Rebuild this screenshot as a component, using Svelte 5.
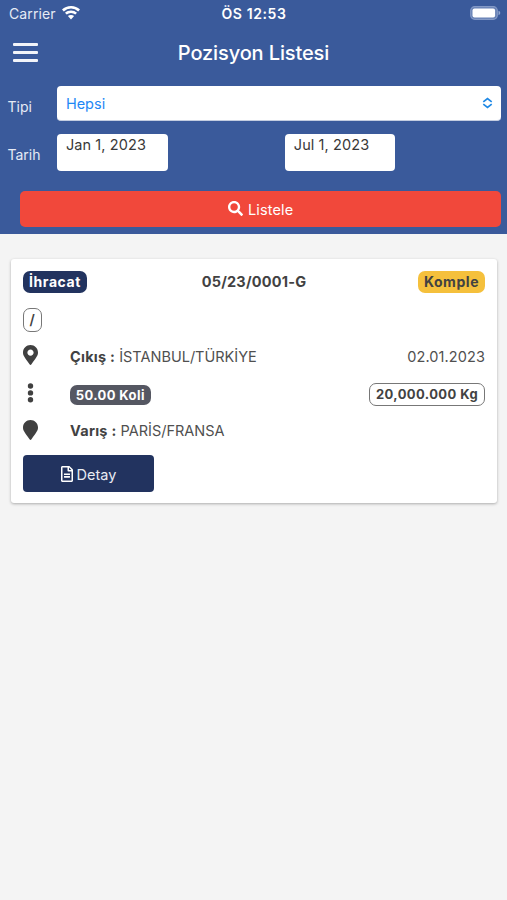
<script>
  const card = {
    direction: 'İhracat',
    number: '05/23/0001-G',
    load: 'Komple',
    plates: '/',
    from: 'İSTANBUL/TÜRKİYE',
    date: '02.01.2023',
    packages: '50.00 Koli',
    weight: '20,000.000 Kg',
    to: 'PARİS/FRANSA'
  };
</script>

<div class="screen">
  <header>
    <div class="status">
      <div class="carrier">
        <span>Carrier</span>
        <svg width="18" height="14" viewBox="0 0 18 14" fill="#fff">
          <path d="M9 0C5.5 0 2.3 1.3 0 3.5L1.8 5.4A10.5 10.5 0 0 1 16.2 5.4L18 3.5A13 13 0 0 0 9 0Z" />
          <path d="M9 4.5C6.700 4.500 4.600 5.400 3 6.800L4.700 8.600A6.300 6.300 0 0 1 13.300 8.600L15 6.800A8.700 8.700 0 0 0 9 4.500Z" />
          <path d="M9 9C7.800 9 6.700 9.400 5.900 10.100L9 13.600L12.100 10.100A4.700 4.700 0 0 0 9 9Z" />
        </svg>
      </div>
      <span class="clock">ÖS 12:53</span>
      <svg class="battery" width="31" height="14" viewBox="0 0 31 14">
        <rect x="0.700" y="0.700" width="26.600" height="12.600" rx="4" fill="#6680b4" stroke="#8399c6" stroke-width="1.200" />
        <rect x="2.500" y="2.500" width="22.600" height="9" rx="2" fill="#fff" />
        <path d="M28.500 4.800Q30.300 5.400 30.300 7T28.500 9.200Z" fill="#92a6cf" />
      </svg>
    </div>

    <div class="navbar">
      <button class="menu" aria-label="Menü"><i></i><i></i><i></i></button>
      <h1>Pozisyon Listesi</h1>
    </div>

    <div class="field type">
      <label for="tipi">Tipi</label>
      <button class="select" id="tipi">
        <span>Hepsi</span>
        <svg width="11" height="12" viewBox="0 0 12 12" fill="none" stroke="#1e88e5" stroke-width="1.800">
          <path d="M1.400 4.800L6 1.100L10.600 4.800M1.400 7.200L6 10.900L10.600 7.200" />
        </svg>
      </button>
    </div>

    <div class="field dates">
      <span class="label">Tarih</span>
      <div class="date"><span>Jan 1, 2023</span></div>
      <div class="date"><span>Jul 1, 2023</span></div>
    </div>

    <button class="list">
      <svg width="15" height="15" viewBox="0 0 512 512" fill="#fff">
        <path d="M505 442.700L405.300 343c-4.500-4.500-10.600-7-17-7H372c27.600-35.300 44-79.700 44-128C416 93.100 322.900 0 208 0S0 93.100 0 208s93.100 208 208 208c48.300 0 92.700-16.400 128-44v16.300c0 6.400 2.500 12.500 7 17l99.700 99.700c9.400 9.400 24.600 9.400 33.900 0l28.300-28.300c9.400-9.400 9.400-24.600.1-34zM208 336c-70.700 0-128-57.200-128-128 0-70.700 57.200-128 128-128 70.700 0 128 57.200 128 128 0 70.700-57.200 128-128 128z" />
      </svg>
      <span>Listele</span>
    </button>
  </header>

  <main>
    <article>
      <div class="row top">
        <span class="badge navy">{card.direction}</span>
        <strong class="number">{card.number}</strong>
        <span class="badge yellow">{card.load}</span>
      </div>

      <div class="row plate"><span class="badge outline slash">{card.plates}</span></div>

      <div class="row from">
        <span class="icon">
          <svg width="15" height="20" viewBox="0 0 384 512" fill="#404040">
            <path d="M172.300 501.700C27 291 0 269.400 0 192 0 86 86 0 192 0s192 86 192 192c0 77.400-27 99-172.300 309.700-9.500 13.800-29.900 13.800-39.400 0zM192 272c44.200 0 80-35.800 80-80s-35.800-80-80-80-80 35.800-80 80 35.800 80 80 80z" />
          </svg>
        </span>
        <b class="caption">Çıkış :</b><span class="place">{card.from}</span>
        <span class="day">{card.date}</span>
      </div>

      <div class="row load">
        <span class="icon">
          <svg width="15" height="20" viewBox="0 0 15 20" fill="#404040">
            <circle cx="7.500" cy="3" r="2.700" /><circle cx="7.500" cy="9.900" r="2.700" /><circle cx="7.500" cy="16.800" r="2.700" />
          </svg>
        </span>
        <span class="badge gray">{card.packages}</span>
        <span class="badge outline weight">{card.weight}</span>
      </div>

      <div class="row to">
        <span class="icon">
          <svg width="15" height="20" viewBox="0 0 384 512" fill="#404040">
            <path d="M172.300 501.700C27 291 0 269.400 0 192 0 86 86 0 192 0s192 86 192 192c0 77.400-27 99-172.300 309.700-9.500 13.800-29.900 13.800-39.400 0z" />
          </svg>
        </span>
        <b class="caption">Varış :</b><span class="place">{card.to}</span>
      </div>

      <button class="detail">
        <svg width="12" height="16" viewBox="0 0 384 512" fill="#fff">
          <path d="M288 248v28c0 6.600-5.400 12-12 12H108c-6.600 0-12-5.400-12-12v-28c0-6.600 5.400-12 12-12h168c6.600 0 12 5.400 12 12zm-12 72H108c-6.600 0-12 5.400-12 12v28c0 6.600 5.400 12 12 12h168c6.600 0 12-5.400 12-12v-28c0-6.600-5.400-12-12-12zm108-188.100V464c0 26.500-21.500 48-48 48H48c-26.500 0-48-21.500-48-48V48C0 21.500 21.500 0 48 0h204.100C264.800 0 277 5.100 286 14.100L369.900 98c9 8.900 14.100 21.200 14.100 33.900zm-128-80V128h76.100L256 51.900zM336 464V176H232c-13.300 0-24-10.700-24-24V48H48v416h288z" />
        </svg>
        <span>Detay</span>
      </button>
    </article>
  </main>
</div>

<style>
  :global(body) {
    margin: 0;
    background: #f4f4f4;
  }
  .screen {
    box-sizing: border-box;
    width: 507px;
    height: 900px;
    overflow: hidden;
    background: #f4f4f4;
    color: #424242;
    font-family: Inter, 'Liberation Sans', sans-serif;
    font-size: 14.5px;
    line-height: 20px;
    white-space: nowrap;
  }
  button {
    border: 0;
    margin: 0;
    padding: 0;
    background: none;
    color: inherit;
    font: inherit;
  }
  svg {
    display: block;
    flex: none;
  }
  header {
    box-sizing: border-box;
    height: 234px;
    background: #3a5a9b;
    color: #fff;
  }
  .status {
    display: grid;
    grid-template-columns: 1fr auto 1fr;
    align-items: center;
    height: 27px;
    padding: 0 6px 0 9px;
  }
  .carrier {
    display: flex;
    align-items: center;
    gap: 6px;
    color: #e6ebf5;
    font-size: 14px;
    letter-spacing: 0.1px;
  }
  .carrier svg {
    margin-top: -1px;
  }
  .clock {
    margin-right: 2px;
    font-size: 14px;
    font-weight: 600;
    letter-spacing: 0.6px;
  }
  .battery {
    justify-self: end;
    margin-top: -1px;
  }
  .navbar {
    display: grid;
    grid-template-columns: 38px 1fr 38px;
    align-items: center;
    height: 50px;
  }
  .menu {
    display: flex;
    flex-direction: column;
    gap: 5px;
    width: 25px;
    margin-left: 13px;
  }
  .menu i {
    height: 3px;
    border-radius: 1px;
    background: #f2f4f9;
  }
  h1 {
    margin: 1px 0 0;
    text-align: center;
    font-size: 20px;
    line-height: 26px;
    font-weight: 450;
    letter-spacing: -0.12px;
  }
  .field {
    display: flex;
    padding: 0 6px 0 7.5px;
  }
  .field label,
  .label {
    width: 49.9px;
    flex: none;
    color: #e6ebf5;
    font-size: 14px;
  }
  .type {
    margin-top: 9px;
  }
  .type label {
    padding-top: 11px;
  }
  .select {
    box-sizing: border-box;
    flex: 1;
    display: flex;
    align-items: center;
    justify-content: space-between;
    height: 35px;
    padding: 0 8px 0 8.5px;
    border-radius: 4px;
    background: #fff;
    border-bottom: 1px solid #c4cde0;
    color: #1e88f5;
  }
  .select span {
    padding-top: 2px;
  }
  .dates {
    margin-top: 13px;
  }
  .label {
    padding-top: 11px;
  }
  .date {
    box-sizing: border-box;
    width: 110.2px;
    height: 37px;
    padding: 1px 8.5px;
    border-radius: 4px;
    background: #fff;
    color: #383838;
    letter-spacing: 0.1px;
  }
  .date + .date {
    margin-left: 117.7px;
  }
  .list {
    display: flex;
    align-items: center;
    justify-content: center;
    gap: 5px;
    width: 480.5px;
    height: 36.5px;
    margin: 19.5px 6px 0 20.4px;
    border-radius: 5px;
    background: #f1483b;
  }
  .list span {
    padding-top: 2px;
    letter-spacing: 0.15px;
  }
  main {
    padding: 25px 10px 0 11px;
  }
  article {
    box-sizing: border-box;
    height: 244px;
    padding: 11px 12px;
    border-radius: 3px;
    background: #fff;
    box-shadow: 0 1px 3px rgba(0, 0, 0, 0.3);
  }
  .row {
    display: flex;
    align-items: center;
  }
  .top {
    justify-content: space-between;
    height: 23px;
  }
  .badge {
    box-sizing: border-box;
    display: inline-flex;
    align-items: center;
    justify-content: center;
    height: 22px;
    border-radius: 7px;
    font-size: 14px;
    font-weight: 650;
    letter-spacing: 0.55px;
  }
  .navy {
    width: 64px;
    background: #22335f;
    color: #fff;
  }
  .yellow {
    width: 67px;
    background: #f5c03c;
  }
  .number {
    margin-left: 3px;
    font-weight: 650;
    letter-spacing: 0.2px;
  }
  .outline {
    height: 24px;
    border: 1px solid #777;
  }
  .slash {
    width: 18.5px;
    border-radius: 7px;
    font-weight: 600;
    letter-spacing: 0;
  }
  .plate {
    height: 24px;
    margin-top: 15px;
  }
  .from {
    height: 24px;
    margin-top: 13px;
  }
  .icon {
    width: 47px;
    flex: none;
  }
  .from .icon {
    margin-top: -4px;
  }
  .caption {
    font-weight: 650;
    letter-spacing: 0.25px;
  }
  .place {
    margin-left: 4px;
    color: #505050;
  }
  .day {
    color: #505050;
    letter-spacing: 0.1px;
  }
  .day,
  .weight {
    margin-left: auto;
  }
  .load {
    height: 24px;
    margin-top: 13px;
  }
  .load .icon {
    margin-top: -3px;
  }
  .gray {
    width: 80.5px;
    height: 20px;
    margin-top: 1px;
    font-size: 13px;
    letter-spacing: 0.4px;
    background: #555762;
    color: #fff;
  }
  .weight {
    width: 116px;
    height: 23px;
    font-size: 13px;
    letter-spacing: 0.4px;
  }
  .to {
    height: 24px;
    margin-top: 13px;
  }
  .to .icon {
    margin-top: -3px;
  }
  .detail {
    display: flex;
    align-items: center;
    justify-content: center;
    gap: 4px;
    width: 131px;
    height: 37px;
    margin-top: 12px;
    border-radius: 4px;
    background: #22335f;
    color: #e9ebf2;
  }
  .detail span {
    padding-top: 2px;
  }
</style>
